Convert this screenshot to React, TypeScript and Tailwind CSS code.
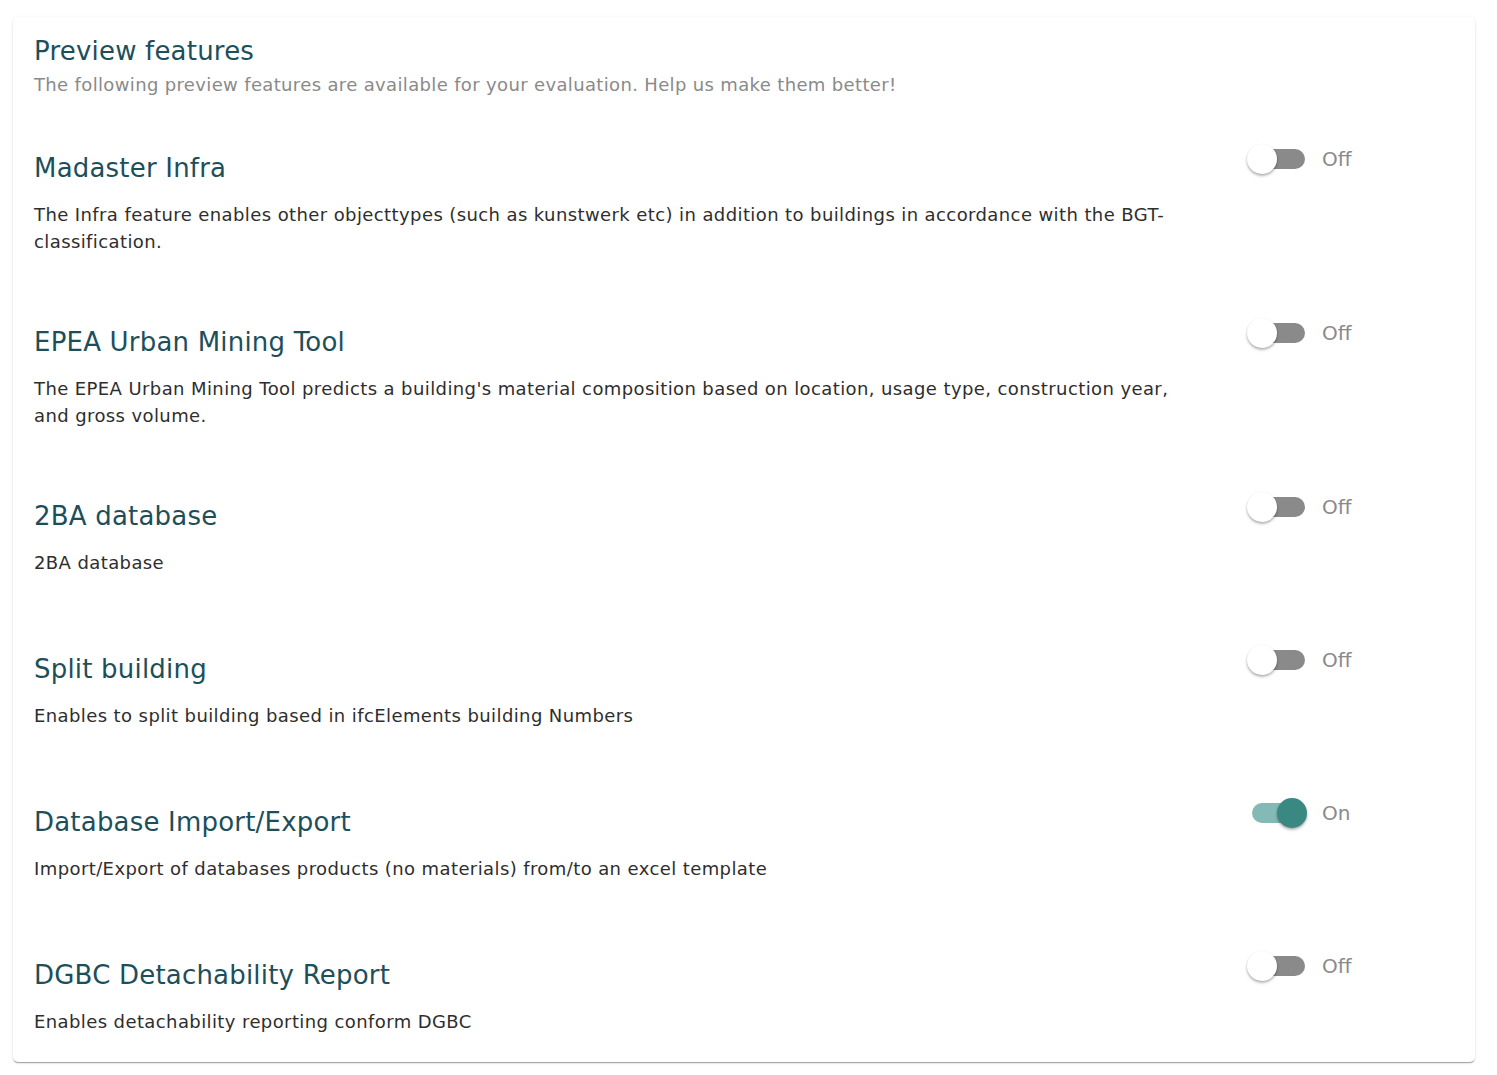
import { useState } from "react";

interface Feature {
  id: string;
  title: string;
  description: string;
  enabled: boolean;
  pad: string;
}

const FEATURES: Feature[] = [
  {
    id: "infra",
    title: "Madaster Infra",
    description:
      "The Infra feature enables other objecttypes (such as kunstwerk etc) in addition to buildings in accordance with the BGT-classification.",
    enabled: false,
    pad: "pb-[69px]",
  },
  {
    id: "epea",
    title: "EPEA Urban Mining Tool",
    description:
      "The EPEA Urban Mining Tool predicts a building's material composition based on location, usage type, construction year, and gross volume.",
    enabled: false,
    pad: "pb-[69px]",
  },
  { id: "2ba", title: "2BA database", description: "2BA database", enabled: false, pad: "pb-[75px]" },
  {
    id: "split",
    title: "Split building",
    description: "Enables to split building based in ifcElements building Numbers",
    enabled: false,
    pad: "pb-[75px]",
  },
  {
    id: "dbio",
    title: "Database Import/Export",
    description: "Import/Export of databases products (no materials) from/to an excel template",
    enabled: true,
    pad: "pb-[75px]",
  },
  {
    id: "dgbc",
    title: "DGBC Detachability Report",
    description: "Enables detachability reporting conform DGBC",
    enabled: false,
    pad: "pb-[27px]",
  },
];

function Toggle({ on, onChange }: { on: boolean; onChange: () => void }) {
  return (
    <button onClick={onChange} className="flex items-center gap-[15px] -mt-[6px]" aria-pressed={on}>
      <span className="relative block w-[58px] h-[30px]">
        <span
          className={
            "absolute left-[5px] right-0 top-[5px] h-[20px] rounded-full " +
            (on ? "bg-[#84bab6]" : "bg-[#8a8a8a]")
          }
        />
        <span
          className={
            "absolute top-0 w-[30px] h-[30px] rounded-full shadow-[0_2px_3px_rgba(0,0,0,0.25),0_1px_2px_rgba(0,0,0,0.12)] " +
            (on ? "left-[30px] bg-[#3a8882]" : "left-0 bg-white")
          }
        />
      </span>
      <span className="ml-[2px] text-[20px] leading-[30px] text-[#8a8a8a]">{on ? "On" : "Off"}</span>
    </button>
  );
}

export default function App() {
  const [state, setState] = useState<Record<string, boolean>>(
    Object.fromEntries(FEATURES.map((f) => [f.id, f.enabled]))
  );

  return (
    <div
      className="min-h-screen bg-white pt-[17px] pl-[13px] pr-[22px]"
      style={{ fontFamily: '"DejaVu Sans", sans-serif' }}
    >
      <div className="w-[1462px] rounded-[5px] bg-white pt-[16px] px-[21px] shadow-[0_2px_1px_-1px_rgba(0,0,0,0.2),0_1px_1px_0_rgba(0,0,0,0.14),0_1px_3px_0_rgba(0,0,0,0.12)]">
        <h1 className="text-[26px] leading-[36px] tracking-[0.2px] text-[#1d4f5b]">Preview features</h1>
        <p className="mt-[2px] text-[18px] leading-[27px] tracking-[0.35px] text-[#8a8a8a]">
          The following preview features are available for your evaluation. Help us make them better!
        </p>

        <div className="mt-[52px]">
          {FEATURES.map((f) => (
            <div key={f.id} className={"flex items-start " + f.pad}>
              <div className="w-[1150px]">
                <h2 className="text-[26px] leading-[36px] tracking-[0.2px] text-[#1d4f5b]">{f.title}</h2>
                <p className="mt-[15px] text-[18px] leading-[27px] tracking-[0.4px] text-[#2e2e2e]">
                  {f.description}
                </p>
              </div>
              <div className="ml-[63px]">
                <Toggle on={state[f.id]} onChange={() => setState((s) => ({ ...s, [f.id]: !s[f.id] }))} />
              </div>
            </div>
          ))}
        </div>
      </div>
    </div>
  );
}
